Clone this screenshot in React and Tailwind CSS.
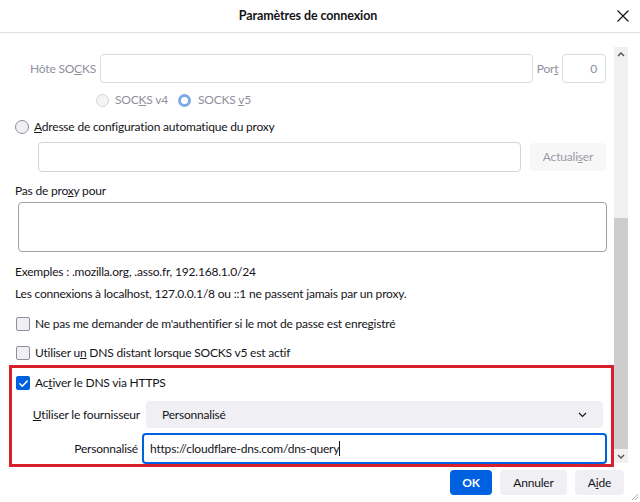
import React from 'react'

const font = { fontFamily: 'Lato, "Noto Sans", sans-serif' }

const Radio = ({ checked, disabled }) => (
  <span
    className={
      checked
        ? 'inline-block w-[13px] h-[13px] rounded-full border-[3.5px] border-[#7fa9e6] bg-white'
        : disabled
          ? 'inline-block w-[13px] h-[13px] rounded-full border border-[#d4d4d8] bg-[#f4f4f6]'
          : 'inline-block w-[14px] h-[14px] rounded-full border border-[#8f8f9d] bg-[#f0f0f4]'
    }
  />
)

const Checkbox = ({ checked }) =>
  checked ? (
    <span className="inline-flex items-center justify-center w-[14px] h-[14px] rounded-[2px] bg-[#0061e0]">
      <svg width="11" height="11" viewBox="0 0 12 12" fill="none">
        <path d="M2 6.3l2.6 2.6L10 3.4" stroke="white" strokeWidth="1.6" strokeLinecap="round" strokeLinejoin="round" />
      </svg>
    </span>
  ) : (
    <span className="inline-block w-[14px] h-[14px] rounded-[2px] border border-[#8f8f9d] bg-[#f0f0f4]" />
  )

const Scrollbar = () => (
  <div className="w-[14px] mt-[14px] mb-[4px] bg-[#f0f0f0] flex flex-col">
    <div className="h-[14px] flex items-center justify-center">
      <svg width="8" height="5" viewBox="0 0 8 5"><path d="M1 4l3-3 3 3" stroke="#505050" strokeWidth="1.4" fill="none" /></svg>
    </div>
    <div className="h-[157px]" />
    <div className="flex-1 bg-[#cdcdcd]" />
    <div className="h-[14px] flex items-center justify-center">
      <svg width="8" height="5" viewBox="0 0 8 5"><path d="M1 1l3 3 3-3" stroke="#505050" strokeWidth="1.4" fill="none" /></svg>
    </div>
  </div>
)

export default function App() {
  return (
    <div className="w-[640px] h-[502px] bg-white text-[#15141a] text-[12px] tracking-[-0.2px] relative overflow-hidden" style={font}>
      <div className="h-[33px] border-b border-[#e0e0e6] flex items-center justify-center relative">
        <p className="text-[12.5px] font-bold tracking-[-0.1px] pr-[24px]">Paramètres de connexion</p>
        <svg className="absolute right-[10px] top-[9px]" width="14" height="14" viewBox="0 0 14 14">
          <path d="M1.5 1.5l11 11M12.5 1.5l-11 11" stroke="#15141a" strokeWidth="1.2" />
        </svg>
      </div>

      <div className="flex h-[434px]">
        <div className="w-[614px] flex flex-col">
          <div className="flex items-center mt-[21px] h-[29px] whitespace-nowrap">
            <span className="w-[100px] text-right pr-[4px] text-[#8f8f9d]">Hôte SO<u>C</u>KS</span>
            <div className="w-[433px] h-[29px] border border-[#dcdce0] rounded-[4px]" />
            <span className="w-[29px] text-center text-[#8f8f9d]">Por<u>t</u></span>
            <div className="w-[44px] h-[29px] border border-[#dcdce0] rounded-[4px] flex items-center justify-end pr-[8px] text-[#8f8f9d]">0</div>
          </div>

          <div className="flex items-center h-[16px] mt-[9px] pl-[96px] text-[#8f8f9d] whitespace-nowrap">
            <Radio disabled />
            <span className="ml-[6px]">SOC<u>K</u>S v4</span>
            <span className="ml-[10px] flex items-center">
              <Radio checked />
            </span>
            <span className="ml-[7px]">SOCKS <u>v</u>5</span>
          </div>

          <div className="flex items-center h-[16px] mt-[11px] pl-[15px] whitespace-nowrap">
            <Radio />
            <span className="ml-[5px]"><u>A</u>dresse de configuration automatique du proxy</span>
          </div>

          <div className="flex items-center mt-[7px] h-[30px] pl-[38px]">
            <div className="w-[483px] h-[30px] border border-[#d4d4d8] rounded-[4px]" />
            <div className="ml-[9px] w-[76px] h-[28px] rounded-[4px] bg-[#f7f7f8] flex items-center justify-center text-[#9a9aa4]">
              Actuali<u>s</u>er
            </div>
          </div>

          <p className="mt-[11px] pl-[15px] h-[16px] leading-[16px]">Pas de pro<u>x</u>y pour</p>

          <div className="mt-[3px] ml-[18px] w-[589px] h-[57px] border border-[#9e9ea6] rounded-[4px]" />

          <p className="mt-[12px] pl-[15px] h-[16px] leading-[16px]">Exemples : .mozilla.org, .asso.fr, 192.168.1.0/24</p>
          <p className="mt-[6px] pl-[15px] h-[16px] leading-[16px]">Les connexions à localhost, 127.0.0.1/8 ou ::1 ne passent jamais par un proxy.</p>

          <div className="flex items-center mt-[14px] h-[16px] pl-[16px] whitespace-nowrap">
            <Checkbox />
            <span className="ml-[5px]">Ne pas me demander de m'authentifier si le mot de passe est enre<u>g</u>istré</span>
          </div>
          <div className="flex items-center mt-[13px] h-[16px] pl-[16px] whitespace-nowrap">
            <Checkbox />
            <span className="ml-[5px]">Utiliser u<u>n</u> DNS distant lorsque SOCKS v5 est actif</span>
          </div>

          <div className="mt-[4px] ml-[9px] w-[605px] h-[102px] border-[3px] border-[#d7202b] flex flex-col whitespace-nowrap">
            <div className="flex items-center mt-[7px] h-[16px] pl-[4px]">
              <Checkbox checked />
              <span className="ml-[5px]">Ac<u>t</u>iver le DNS via HTTPS</span>
            </div>
            <div className="flex items-center mt-[10px] h-[27px]">
              <span className="w-[134px] text-right pr-[6px]"><u>U</u>tiliser le fournisseur</span>
              <div className="w-[457px] h-[27px] rounded-[4px] bg-[#f0f0f4] flex items-center justify-between pl-[16px] pr-[16px]">
                <span>Personnalisé</span>
                <svg width="9" height="6" viewBox="0 0 9 6"><path d="M1 1l3.5 3.5L8 1" stroke="#15141a" strokeWidth="1.1" fill="none" /></svg>
              </div>
            </div>
            <div className="flex items-center mt-[5px] h-[31px]">
              <span className="w-[130px] text-right pr-[4px]">Personnalisé</span>
              <div className="w-[465px] h-[31px] rounded-[4px] border-2 border-[#0061e0] flex items-center pl-[6px]">
                <span>https://cloudflare-dns.com/dns-query</span>
                <span className="inline-block w-px h-[15px] bg-[#15141a]" />
              </div>
            </div>
          </div>
        </div>
        <Scrollbar />
      </div>

      <div className="flex justify-end gap-[8px] pr-[16px] mt-[3px]">
        <div className="w-[42px] h-[25px] rounded-[4px] bg-[#0061e0] text-white font-bold flex items-center justify-center">OK</div>
        <div className="w-[67px] h-[25px] rounded-[4px] bg-[#f0f0f4] flex items-center justify-center">Annuler</div>
        <div className="w-[49px] h-[25px] rounded-[4px] bg-[#f0f0f4] flex items-center justify-center">A<u>i</u>de</div>
      </div>

      <svg className="absolute right-[1px] bottom-[1px]" width="8" height="8" viewBox="0 0 8 8">
        <path d="M7 1L1 7M7 4L4 7" stroke="#a0a0a0" strokeWidth="0.8" />
      </svg>
    </div>
  )
}
